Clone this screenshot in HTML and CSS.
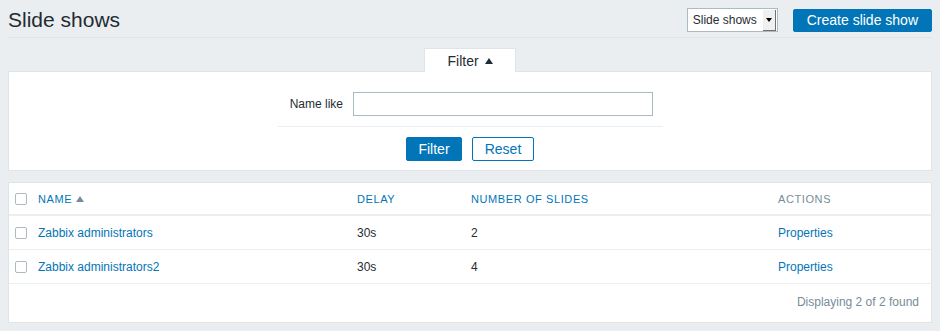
FILE: index.html
```html
<!doctype html>
<html lang="en">
<head>
    <meta charset="UTF-8">
    <title>Slide shows</title>
    <link rel="stylesheet" href="styles.css">
</head>
<body>
<div class="wrap">
    <div class="header">
        <h1 class="header-title">Slide shows</h1>
        <div class="header-controls">
            <div class="select-box">
                <span class="select-text">Slide shows</span>
                <span class="select-arrow"><span class="tri-down"></span></span>
            </div>
            <button class="btn-main">Create slide show</button>
        </div>
    </div>

    <div class="filter-tabs">
        <div class="filter-tab">Filter <span class="tri-up"></span></div>
    </div>
    <div class="filter-panel">
        <div class="filter-form">
            <div class="form-row">
                <label class="form-label">Name like</label>
                <input class="form-input" type="text">
            </div>
            <div class="form-buttons">
                <button class="btn-filter">Filter</button>
                <button class="btn-reset">Reset</button>
            </div>
        </div>
    </div>

    <div class="list-table">
        <div class="tr th">
            <div class="td"><span class="checkbox"></span></div>
            <div class="td"><a class="sort">NAME</a> <span class="sort-arrow"></span></div>
            <div class="td"><a class="sort">DELAY</a></div>
            <div class="td"><a class="sort">NUMBER OF SLIDES</a></div>
            <div class="td muted">ACTIONS</div>
        </div>
        <div class="tr">
            <div class="td"><span class="checkbox"></span></div>
            <div class="td"><a class="link">Zabbix administrators</a></div>
            <div class="td">30s</div>
            <div class="td">2</div>
            <div class="td"><a class="link">Properties</a></div>
        </div>
        <div class="tr">
            <div class="td"><span class="checkbox"></span></div>
            <div class="td"><a class="link">Zabbix administrators2</a></div>
            <div class="td">30s</div>
            <div class="td">4</div>
            <div class="td"><a class="link">Properties</a></div>
        </div>
        <div class="table-footer">Displaying 2 of 2 found</div>
    </div>
</div>
</body>
</html>
```

FILE: styles.css
```css
body {
    margin: 0;
    padding: 0;
    background: #ebeef0;
    font-family: "Liberation Sans", Arial, sans-serif;
    font-size: 12px;
    color: #1f2c33;
}
.wrap {
    margin: 0 8px;
}
button {
    font-family: "Liberation Sans", Arial, sans-serif;
    cursor: pointer;
}
/* header */
.header {
    display: flex;
    justify-content: space-between;
    align-items: center;
    padding: 8px 0 5px 0;
    border-bottom: 1px solid #dfe4e7;
}
.header-title {
    margin: 0;
    font-size: 21px;
    font-weight: normal;
    line-height: 24px;
}
.header-controls {
    display: flex;
    align-items: center;
}
.select-box {
    display: flex;
    align-items: center;
    box-sizing: border-box;
    width: 91px;
    height: 24px;
    background: #ffffff;
    border: 1px solid #acbbc2;
    margin-right: 15px;
}
.select-text {
    flex: 1;
    padding-left: 5px;
}
.select-arrow {
    display: flex;
    align-items: center;
    justify-content: center;
    box-sizing: border-box;
    width: 13px;
    height: 21px;
    margin-right: 1px;
    background: #f0f0f0;
    border-right: 1px solid #707070;
    border-bottom: 1px solid #707070;
}
.tri-down {
    width: 0;
    height: 0;
    border-left: 3px solid transparent;
    border-right: 3px solid transparent;
    border-top: 4px solid #000000;
}
.btn-main {
    height: 23px;
    padding: 0 13px;
    background: #0275b8;
    border: 1px solid #0275b8;
    border-radius: 2px;
    color: #ffffff;
    font-size: 14px;
}
/* filter */
.filter-tabs {
    display: flex;
    justify-content: center;
    margin-top: 10px;
}
.filter-tab {
    box-sizing: border-box;
    width: 92px;
    height: 24px;
    margin-bottom: -1px;
    background: #ffffff;
    border: 1px solid #dfe4e7;
    border-bottom: none;
    text-align: center;
    font-size: 14px;
    line-height: 24px;
    position: relative;
}
.tri-up {
    display: inline-block;
    vertical-align: 2px;
    margin-left: 2px;
    width: 0;
    height: 0;
    border-left: 4px solid transparent;
    border-right: 4px solid transparent;
    border-bottom: 6px solid #1f2c33;
}
.filter-panel {
    box-sizing: border-box;
    height: 100px;
    background: #ffffff;
    border: 1px solid #dfe4e7;
    display: flex;
    justify-content: center;
    padding-top: 20px;
}
.filter-form {
    width: 385px;
    margin-left: 1px;
}
.form-row {
    display: flex;
    align-items: center;
    padding-bottom: 10px;
    border-bottom: 1px solid #ebeef0;
}
.form-label {
    width: 65px;
    text-align: right;
    padding-right: 10px;
}
.form-input {
    box-sizing: border-box;
    width: 300px;
    height: 24px;
    margin: 0;
    border: 1px solid #acbbc2;
}
.form-buttons {
    display: flex;
    justify-content: center;
    gap: 10px;
    padding-top: 10px;
    margin-right: 1px;
}
.btn-filter,
.btn-reset {
    box-sizing: border-box;
    height: 24px;
    border-radius: 2px;
    font-size: 14px;
    border: 1px solid #0275b8;
}
.btn-filter {
    width: 56px;
    background: #0275b8;
    color: #ffffff;
}
.btn-reset {
    width: 62px;
    background: #ffffff;
    color: #0275b8;
}
/* table */
.list-table {
    margin-top: 11px;
    background: #ffffff;
    border: 1px solid #dfe4e7;
}
.tr {
    display: grid;
    grid-template-columns: 24px 319px 114px 307px 158px;
    height: 33px;
    align-items: center;
    border-bottom: 1px solid #ebeef0;
}
.th {
    height: 31px;
    border-bottom: 2px solid #ebeef0;
    font-size: 11px;
    letter-spacing: 0.6px;
}
.td {
    padding-left: 5px;
    display: flex;
    align-items: center;
}
.td:first-child {
    padding-left: 6px;
}
.checkbox {
    display: inline-block;
    box-sizing: border-box;
    width: 12px;
    height: 12px;
    border: 1px solid #acbbc2;
    border-radius: 2px;
    background: #ffffff;
}
.sort,
.link {
    color: #0275b8;
    text-decoration: none;
}
.muted {
    color: #768d99;
}
.sort-arrow {
    display: inline-block;
    margin-left: 4px;
    width: 0;
    height: 0;
    border-left: 4px solid transparent;
    border-right: 4px solid transparent;
    border-bottom: 6px solid #768d99;
}
.table-footer {
    height: 38px;
    line-height: 37px;
    text-align: right;
    padding-right: 12px;
    color: #768d99;
}
```
